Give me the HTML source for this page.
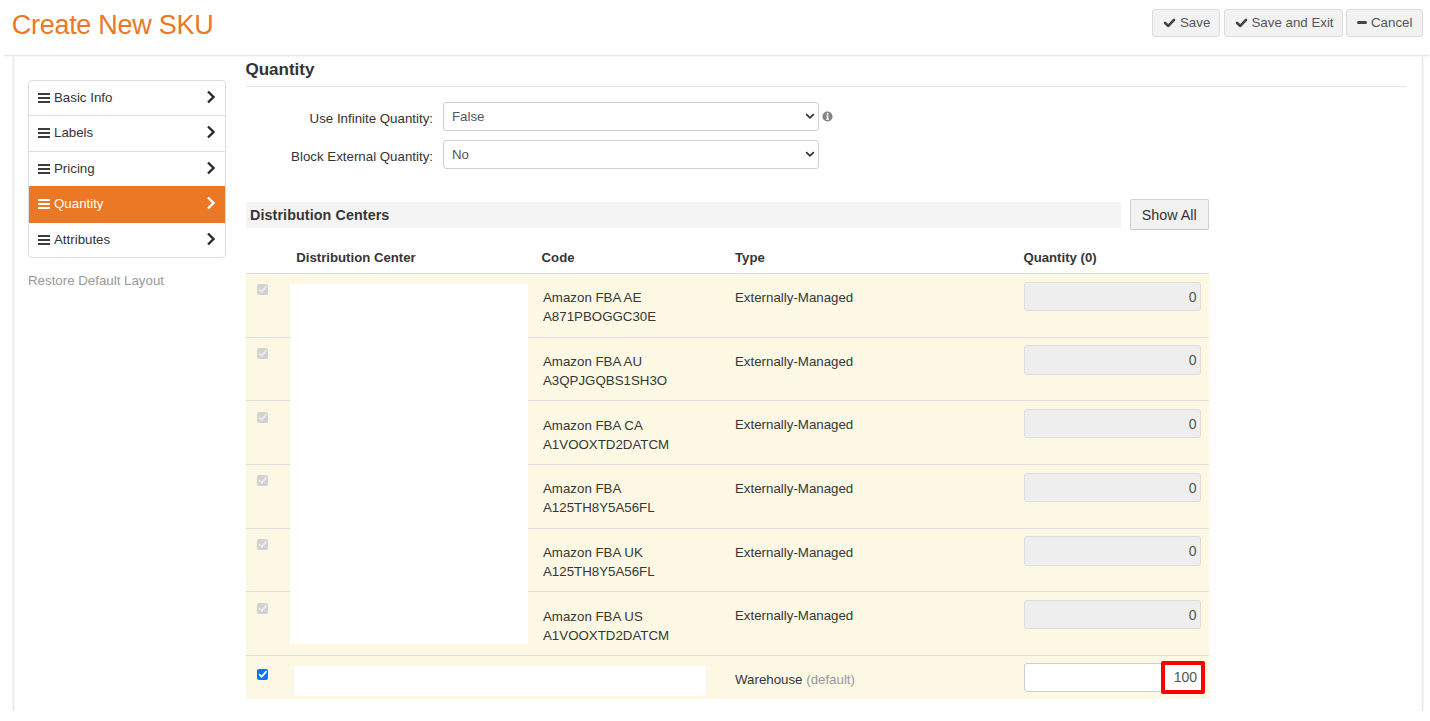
<!DOCTYPE html>
<html><head><meta charset="utf-8">
<style>
*{box-sizing:border-box}
html,body{margin:0;padding:0;background:#fff;width:1430px;height:721px;overflow:hidden}
body{font-family:"Liberation Sans",sans-serif;font-size:13.3px;color:#363636;position:relative}
.a{position:absolute;white-space:nowrap}
.title{left:11.7px;top:4.7px;font-size:27px;line-height:40px;color:#ea7825;letter-spacing:-0.27px}
.btn{position:absolute;top:9px;height:28px;background:#f2f2f2;border:1px solid #dcdcdc;border-radius:3px;color:#555;font-size:13.3px;line-height:26px;white-space:nowrap}
.hline{left:4px;top:54px;width:1425px;height:3px;background:linear-gradient(to bottom,#f7f7f7 0,#f7f7f7 1px,#e8e8e8 1px,#e8e8e8 2px,#f7f7f7 2px)}
.vl{top:56px;width:3px;height:655px;background:linear-gradient(to right,#f7f7f7 0,#f7f7f7 1px,#e8e8e8 1px,#e8e8e8 2px,#f7f7f7 2px)}
.nav{left:28px;top:80px;width:198px;height:178px;border:1px solid #ddd;border-radius:4px;overflow:hidden}
.item{position:absolute;left:0;width:196px;height:37px;border-top:1px solid #ddd}
.item .t{position:absolute;left:25px;top:8px;line-height:18px;font-size:13.3px;color:#333}
.ham{position:absolute;left:9px;top:12px;width:12px;height:9px}
.ham i{position:absolute;left:0;width:12.2px;height:2px;background:#3c3c3c}
.chev{position:absolute;left:177.4px;top:9px}
.h3{left:245.5px;top:56.3px;font-size:17px;font-weight:bold;line-height:28px;color:#333}
.uline{left:246px;top:86px;width:1160px;height:1px;background:#e5e5e5}
.lbl{font-size:13.3px;line-height:18px;color:#333}
.sel{position:absolute;left:443px;width:376px;height:29px;border:1px solid #d0d0d0;border-radius:3px;background:#fff}
.sel .t{position:absolute;left:8px;top:5px;line-height:18px;color:#555}
.sel svg{position:absolute;left:361px;top:10px}
.dcbar{left:246px;top:202px;width:875px;height:26px;background:#f4f4f4}
.dcbar .t{position:absolute;left:4px;top:4px;font-size:14.3px;font-weight:bold;line-height:18px;letter-spacing:0.1px}
.showall{position:absolute;left:1130px;top:199.3px;width:78.5px;height:31px;background:#f2f2f2;border:1px solid #d2d2d2;border-bottom-color:#c8c8c8;border-radius:2px;font-size:14.3px;line-height:31px;text-align:center;color:#333}
.th{font-weight:bold;font-size:13.2px;line-height:18px;top:248.5px}
.row{position:absolute;left:246px;width:963px;background:#fcf8e3;border-top:1px solid #ddd}
.cb{position:absolute;left:11px;width:11px;height:11.2px;border-radius:2px;background:#d2d2d0}
.code{position:absolute;left:297px;line-height:19.2px}
.type{position:absolute;left:489px;line-height:18px}
.qin{position:absolute;left:778px;width:177px;height:29.4px;background:#eee;border:1px solid #ddd;border-radius:3px;text-align:right;padding-right:3.5px;line-height:28px;color:#555;font-size:14px;letter-spacing:0}
</style></head><body>
<div class="a title">Create New SKU</div>

<div class="btn" style="left:1152px;width:68px;"><svg class="a" style="left:9px;top:6px" width="16" height="14" viewBox="0 0 16 14"><path d="M3.1 7 L6.3 9.9 L12 3.9" fill="none" stroke="#444" stroke-width="2.7" stroke-linecap="round" stroke-linejoin="round"/></svg><span class="a" style="left:27px;top:0">Save</span></div>
<div class="btn" style="left:1224px;width:119px;"><svg class="a" style="left:9px;top:6px" width="16" height="14" viewBox="0 0 16 14"><path d="M3.1 7 L6.3 9.9 L12 3.9" fill="none" stroke="#444" stroke-width="2.7" stroke-linecap="round" stroke-linejoin="round"/></svg><span class="a" style="left:26.5px;top:0">Save and Exit</span></div>
<div class="btn" style="left:1346px;width:77px;"><div class="a" style="left:9.5px;top:10.8px;width:10.5px;height:3.2px;background:#444;border-radius:1.5px"></div><span class="a" style="left:24px;top:0">Cancel</span></div>

<div class="a hline"></div>
<div class="a vl" style="left:12px"></div>
<div class="a vl" style="left:1421px"></div>

<div class="a nav">
  <div class="item" style="top:-1px"><div class="ham"><i style="top:0"></i><i style="top:3.9px"></i><i style="top:7.8px"></i></div><span class="t">Basic Info</span><svg class="chev" width="10" height="14" viewBox="0 0 10 14"><path d="M2 1.5 L7.5 7 L2 12.5" fill="none" stroke="#2a2a2a" stroke-width="2.4"/></svg></div>
  <div class="item" style="top:34px"><div class="ham"><i style="top:0"></i><i style="top:3.9px"></i><i style="top:7.8px"></i></div><span class="t">Labels</span><svg class="chev" width="10" height="14" viewBox="0 0 10 14"><path d="M2 1.5 L7.5 7 L2 12.5" fill="none" stroke="#2a2a2a" stroke-width="2.4"/></svg></div>
  <div class="item" style="top:70px"><div class="ham"><i style="top:0"></i><i style="top:3.9px"></i><i style="top:7.8px"></i></div><span class="t">Pricing</span><svg class="chev" width="10" height="14" viewBox="0 0 10 14"><path d="M2 1.5 L7.5 7 L2 12.5" fill="none" stroke="#2a2a2a" stroke-width="2.4"/></svg></div>
  <div class="item" style="top:105px;background:#ea7825;border-top-color:#ea7825;z-index:2"><div class="ham"><i style="top:0;background:#fff"></i><i style="top:3.9px;background:#fff"></i><i style="top:7.8px;background:#fff"></i></div><span class="t" style="color:#fff">Quantity</span><svg class="chev" width="10" height="14" viewBox="0 0 10 14"><path d="M2 1.5 L7.5 7 L2 12.5" fill="none" stroke="#fff" stroke-width="2.4"/></svg></div>
  <div class="item" style="top:141px"><div class="ham"><i style="top:0"></i><i style="top:3.9px"></i><i style="top:7.8px"></i></div><span class="t">Attributes</span><svg class="chev" width="10" height="14" viewBox="0 0 10 14"><path d="M2 1.5 L7.5 7 L2 12.5" fill="none" stroke="#2a2a2a" stroke-width="2.4"/></svg></div>
</div>
<div class="a" style="left:28px;top:271.5px;line-height:18px;color:#999">Restore Default Layout</div>

<div class="a h3">Quantity</div>
<div class="a uline"></div>

<div class="a lbl" style="left:309px;top:110px;width:124px;text-align:right">Use Infinite Quantity:</div>
<div class="sel" style="top:102px"><span class="t">False</span><svg width="10" height="7" viewBox="0 0 10 7"><path d="M1.2 1.2 L5 4.8 L8.8 1.2" fill="none" stroke="#333" stroke-width="1.8"/></svg></div>
<svg class="a" style="left:822px;top:110.5px" width="11" height="11" viewBox="0 0 11 11"><circle cx="5.5" cy="5.5" r="5.1" fill="#858585"/><circle cx="5.6" cy="2.9" r="1.05" fill="#fff"/><path d="M4.3 4.6 H6.4 V7.7 H7.1 V8.7 H4.1 V7.7 H4.8 V5.5 H4.3 Z" fill="#fff"/></svg>
<div class="a lbl" style="left:279px;top:148px;width:154px;text-align:right">Block External Quantity:</div>
<div class="sel" style="top:140px"><span class="t">No</span><svg width="10" height="7" viewBox="0 0 10 7"><path d="M1.2 1.2 L5 4.8 L8.8 1.2" fill="none" stroke="#333" stroke-width="1.8"/></svg></div>

<div class="a dcbar"><span class="t">Distribution Centers</span></div>
<div class="showall">Show All</div>

<div class="a th" style="left:296.3px">Distribution Center</div>
<div class="a th" style="left:541.6px">Code</div>
<div class="a th" style="left:735px">Type</div>
<div class="a th" style="left:1023.4px">Quantity (0)</div>

<div class="row" style="top:273.00px;height:63.68px"><div class="cb" style="top:10.2px"><svg width="12" height="12" viewBox="0 0 12 12" style="position:absolute;left:0;top:0"><path d="M2.6 5.6 L4.7 7.9 L9.1 2.6" fill="none" stroke="#ececec" stroke-width="1.7" stroke-linecap="round" stroke-linejoin="round"/></svg></div><div class="code" style="top:14.2px">Amazon FBA AE<br>A871PBOGGC30E</div><div class="type" style="top:15px">Externally-Managed</div><div class="qin" style="top:7.6px">0</div></div>
<div class="row" style="top:336.67px;height:63.68px"><div class="cb" style="top:10.2px"><svg width="12" height="12" viewBox="0 0 12 12" style="position:absolute;left:0;top:0"><path d="M2.6 5.6 L4.7 7.9 L9.1 2.6" fill="none" stroke="#ececec" stroke-width="1.7" stroke-linecap="round" stroke-linejoin="round"/></svg></div><div class="code" style="top:14.2px">Amazon FBA AU<br>A3QPJGQBS1SH3O</div><div class="type" style="top:15px">Externally-Managed</div><div class="qin" style="top:7.6px">0</div></div>
<div class="row" style="top:400.33px;height:63.68px"><div class="cb" style="top:10.2px"><svg width="12" height="12" viewBox="0 0 12 12" style="position:absolute;left:0;top:0"><path d="M2.6 5.6 L4.7 7.9 L9.1 2.6" fill="none" stroke="#ececec" stroke-width="1.7" stroke-linecap="round" stroke-linejoin="round"/></svg></div><div class="code" style="top:14.2px">Amazon FBA CA<br>A1VOOXTD2DATCM</div><div class="type" style="top:15px">Externally-Managed</div><div class="qin" style="top:7.6px">0</div></div>
<div class="row" style="top:464.00px;height:63.68px"><div class="cb" style="top:10.2px"><svg width="12" height="12" viewBox="0 0 12 12" style="position:absolute;left:0;top:0"><path d="M2.6 5.6 L4.7 7.9 L9.1 2.6" fill="none" stroke="#ececec" stroke-width="1.7" stroke-linecap="round" stroke-linejoin="round"/></svg></div><div class="code" style="top:14.2px">Amazon FBA<br>A125TH8Y5A56FL</div><div class="type" style="top:15px">Externally-Managed</div><div class="qin" style="top:7.6px">0</div></div>
<div class="row" style="top:527.67px;height:63.68px"><div class="cb" style="top:10.2px"><svg width="12" height="12" viewBox="0 0 12 12" style="position:absolute;left:0;top:0"><path d="M2.6 5.6 L4.7 7.9 L9.1 2.6" fill="none" stroke="#ececec" stroke-width="1.7" stroke-linecap="round" stroke-linejoin="round"/></svg></div><div class="code" style="top:14.2px">Amazon FBA UK<br>A125TH8Y5A56FL</div><div class="type" style="top:15px">Externally-Managed</div><div class="qin" style="top:7.6px">0</div></div>
<div class="row" style="top:591.33px;height:63.68px"><div class="cb" style="top:10.2px"><svg width="12" height="12" viewBox="0 0 12 12" style="position:absolute;left:0;top:0"><path d="M2.6 5.6 L4.7 7.9 L9.1 2.6" fill="none" stroke="#ececec" stroke-width="1.7" stroke-linecap="round" stroke-linejoin="round"/></svg></div><div class="code" style="top:14.2px">Amazon FBA US<br>A1VOOXTD2DATCM</div><div class="type" style="top:15px">Externally-Managed</div><div class="qin" style="top:7.6px">0</div></div>
<div class="row" style="top:655px;height:44px"><div class="cb" style="top:13px;background:#0a75ff"><svg width="12" height="12" viewBox="0 0 12 12" style="position:absolute;left:0;top:0"><path d="M2.6 5.6 L4.7 7.9 L9.1 2.6" fill="none" stroke="#fff" stroke-width="1.7" stroke-linecap="round" stroke-linejoin="round"/></svg></div><div class="type" style="top:15px">Warehouse <span style="color:#999">(default)</span></div><div class="qin" style="top:7px;background:#fff;border-color:#ccc;height:29px"></div></div>
<div class="a" style="left:290px;top:284px;width:238px;height:360px;background:#fff"></div>
<div class="a" style="left:294px;top:665.5px;width:412px;height:30.5px;background:#fff"></div>
<div class="a" style="left:1161px;top:661px;width:44px;height:33px;border:4px solid #f00;border-radius:2px;background:#fff;text-align:right;padding-right:4px;line-height:24px;color:#555;font-size:14px;letter-spacing:0">100</div>
</body></html>
